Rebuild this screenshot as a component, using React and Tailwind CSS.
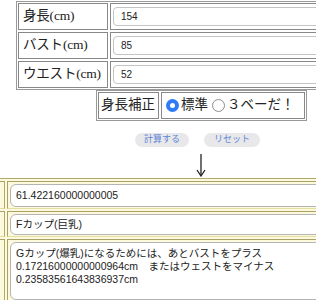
export default function App() {
  const serif = "font-['Liberation_Serif','Noto_Sans_CJK_JP',serif]";
  const sans = "font-['Liberation_Sans','Noto_Sans_CJK_JP',sans-serif]";
  const rows = [
    ["身長(cm)", "154"],
    ["バスト(cm)", "85"],
    ["ウエスト(cm)", "52"],
  ];
  return (
    <div className="w-[316px] h-[300px] overflow-hidden bg-white">
      <div className="w-[400px]">
        {/* top input table */}
        <div className="ml-[16px] mt-[1px] w-[370px] border border-[#999] p-[1px] flex flex-col gap-[2px]">
          {rows.map(([label, val]) => (
            <div key={label} className="flex gap-[2px] h-[27px]">
              <div className={`w-[90px] border border-[#888] flex items-center pl-[4px] text-[13.5px] tracking-[-0.2px] text-[#222] whitespace-nowrap overflow-hidden ${serif}`}>
                {label}
              </div>
              <div className="flex-1 border border-[#888] flex items-center pl-[2px]">
                <div className={`w-full h-[19px] rounded-[4px] border border-[#c4c4c4] bg-white flex items-center pl-[7px] text-[10px] text-[#222] ${sans}`}>
                  {val}
                </div>
              </div>
            </div>
          ))}
        </div>

        {/* correction table */}
        <div className={`ml-[96px] w-[211px] border border-[#999] p-[1px] flex gap-[2px] h-[31px] text-[13.5px] text-[#222] ${serif}`}>
          <div className="w-[61px] border border-[#888] flex items-center pl-[2px] whitespace-nowrap">身長補正</div>
          <div className="flex-1 border border-[#888] flex items-center pl-[4px] whitespace-nowrap overflow-hidden">
            <span className="w-[13px] h-[13px] shrink-0 rounded-full bg-[#2f7cf6] flex items-center justify-center">
              <span className="w-[5px] h-[5px] rounded-full bg-white" />
            </span>
            <span className="ml-[2px]">標準</span>
            <span className="ml-[4px] w-[13px] h-[13px] shrink-0 rounded-full border border-[#8e8e8e] bg-white" />
            <span className="ml-[2px]">３ベーだ！</span>
          </div>
        </div>

        {/* buttons */}
        <div className={`ml-[135px] mt-[12px] flex gap-[15px] text-[9px] ${sans}`}>
          <div className="w-[54px] h-[14px] rounded-full bg-[#e8e8eb] text-[#5d86d4] flex items-center justify-center">計算する</div>
          <div className="w-[56px] h-[14px] rounded-full bg-[#e8e8eb] text-[#5d86d4] flex items-center justify-center">リセット</div>
        </div>

        {/* arrow */}
        <div className="ml-[195px] mt-[6px] h-[24px]">
          <svg width="12" height="24" viewBox="0 0 12 24">
            <path d="M6 1 V22" stroke="#222" strokeWidth="1.3" fill="none" />
            <path d="M2 17 L6 23 L10 17" stroke="#222" strokeWidth="1.3" fill="none" />
          </svg>
        </div>

        {/* results */}
        <div className={`mt-[1px] w-[400px] border-t border-[#b0a96e] bg-[#fcf9dc] pt-[2px] pr-[2px] flex flex-col gap-[2px] text-[10.5px] text-[#222] ${sans}`}>
          <div className="flex gap-[2px]">
            <div className="w-[5px] border-y border-r border-t-[#a8a168] border-b-[#e4dea2] border-r-[#b0a96e]" />
            <div className="flex-1 border border-t-[#a8a168] border-l-[#a8a168] border-b-[#e4dea2] border-r-[#e4dea2] pt-[2px] pb-[1px] pl-[2px]">
              <div className="h-[23px] rounded-[6px] border border-[#b4b4b4] bg-white flex items-center pl-[5px]">61.422160000000005</div>
            </div>
          </div>
          <div className="flex gap-[2px]">
            <div className="w-[5px] border-y border-r border-t-[#a8a168] border-b-[#e4dea2] border-r-[#b0a96e]" />
            <div className="flex-1 border border-t-[#a8a168] border-l-[#a8a168] border-b-[#e4dea2] border-r-[#e4dea2] pt-[2px] pb-[1px] pl-[2px]">
              <div className="h-[21px] rounded-[6px] border border-[#b4b4b4] bg-white flex items-center pl-[5px]">Fカップ(巨乳)</div>
            </div>
          </div>
          <div className="flex gap-[2px]">
            <div className="w-[5px] border-y border-r border-t-[#a8a168] border-b-[#e4dea2] border-r-[#b0a96e]" />
            <div className="flex-1 border border-t-[#a8a168] border-l-[#a8a168] border-b-[#e4dea2] border-r-[#e4dea2] pt-[2px] pb-[1px] pl-[2px]">
              <div className="h-[58px] rounded-[6px] border border-[#b4b4b4] bg-white pl-[5px] pt-[4px] leading-[13px] whitespace-pre">
                {"Gカップ(爆乳)になるためには、あとバストをプラス\n0.17216000000000964cm　またはウェストをマイナス\n0.23583561643836937cm"}
              </div>
            </div>
          </div>
        </div>
      </div>
    </div>
  );
}
